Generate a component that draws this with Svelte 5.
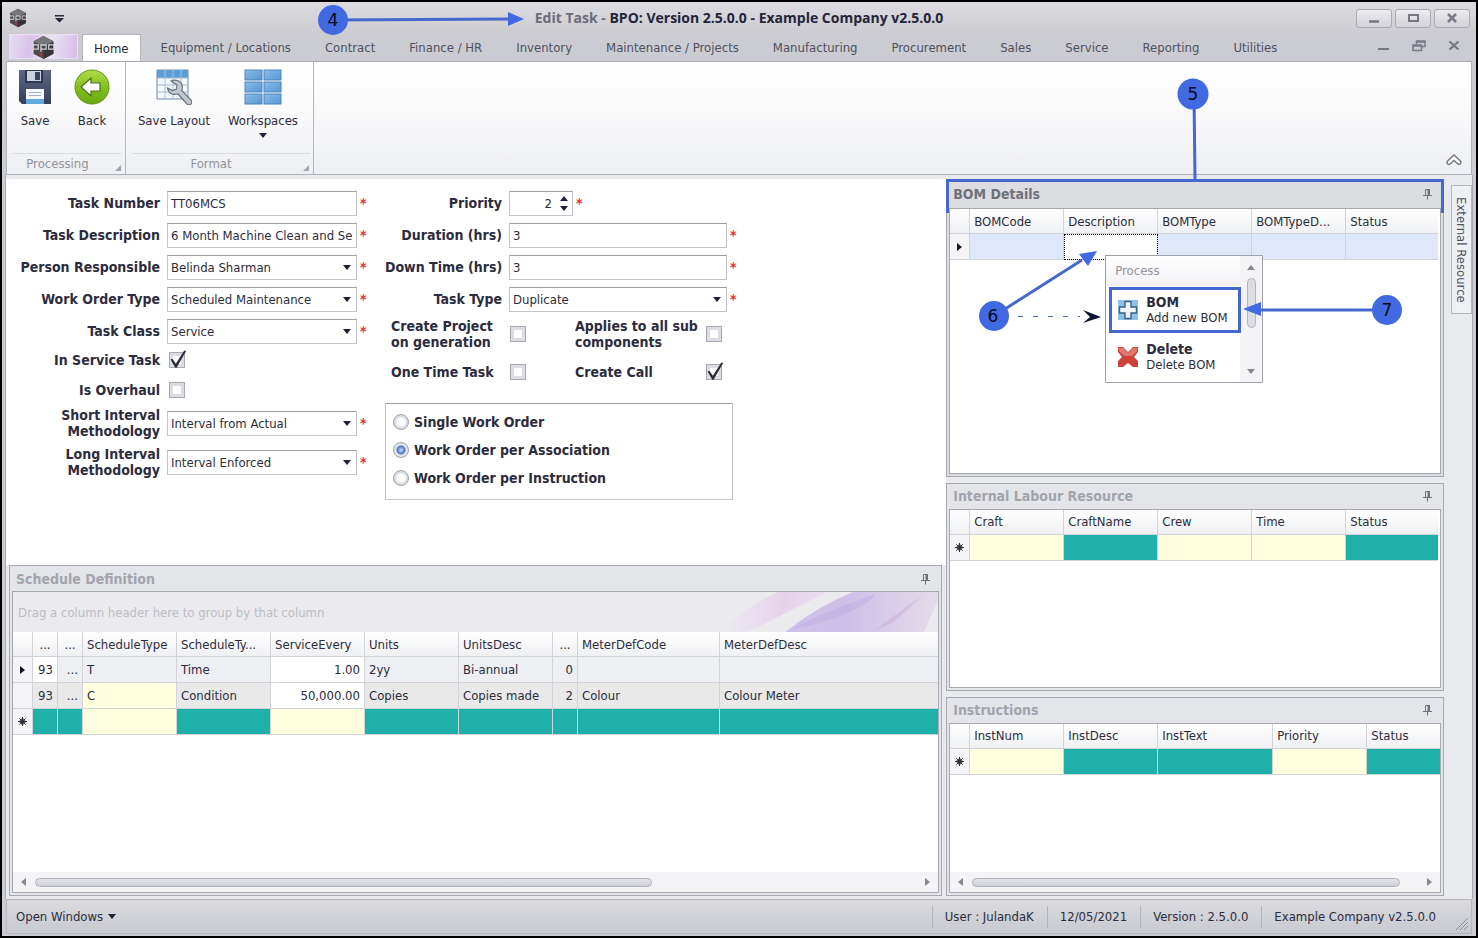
<script lang="ts">
	type Column = { name: string; width?: number };
	type Cell = { text?: string; tone?: string; num?: boolean };

	const tabs = [
		'Home',
		'Equipment / Locations',
		'Contract',
		'Finance / HR',
		'Inventory',
		'Maintenance / Projects',
		'Manufacturing',
		'Procurement',
		'Sales',
		'Service',
		'Reporting',
		'Utilities'
	];
	let activeTab = $state('Home');

	// Form state
	let taskNumber = $state('TT06MCS');
	let taskDescription = $state('6 Month Machine Clean and Service');
	let priority = $state(2);
	let duration = $state('3');
	let downTime = $state('3');
	let inService = $state(true);
	let isOverhaul = $state(false);
	let createProject = $state(false);
	let oneTime = $state(false);
	let allSub = $state(false);
	let createCall = $state(true);
	let grouping = $state('Work Order per Association');

	const groupings = ['Single Work Order', 'Work Order per Association', 'Work Order per Instruction'];

	// Grids
	const scheduleColumns: Column[] = [
		{ name: '...', width: 25 },
		{ name: '...', width: 25 },
		{ name: 'ScheduleType', width: 94 },
		{ name: 'ScheduleTy...', width: 94 },
		{ name: 'ServiceEvery', width: 94 },
		{ name: 'Units', width: 94 },
		{ name: 'UnitsDesc', width: 94 },
		{ name: '...', width: 25 },
		{ name: 'MeterDefCode', width: 142 },
		{ name: 'MeterDefDesc' }
	];

	const scheduleRows: { mark: string; tone: string; cells: Cell[] }[] = [
		{
			mark: 'current',
			tone: 'plain',
			cells: [
				{ text: '93', tone: 'white', num: true },
				{ text: '...', num: true },
				{ text: 'T' },
				{ text: 'Time' },
				{ text: '1.00', tone: 'white', num: true },
				{ text: '2yy' },
				{ text: 'Bi-annual' },
				{ text: '0', num: true },
				{},
				{}
			]
		},
		{
			mark: '',
			tone: 'alt',
			cells: [
				{ text: '93', num: true },
				{ text: '...', num: true },
				{ text: 'C', tone: 'yellow' },
				{ text: 'Condition' },
				{ text: '50,000.00', tone: 'white', num: true },
				{ text: 'Copies' },
				{ text: 'Copies made' },
				{ text: '2', num: true },
				{ text: 'Colour' },
				{ text: 'Colour Meter' }
			]
		},
		{
			mark: 'new',
			tone: 'teal',
			cells: [{}, {}, { tone: 'yellow' }, {}, { tone: 'yellow' }, {}, {}, {}, {}, {}]
		}
	];

	const bomColumns: Column[] = [
		{ name: 'BOMCode', width: 94 },
		{ name: 'Description', width: 94 },
		{ name: 'BOMType', width: 94 },
		{ name: 'BOMTypeD...', width: 94 },
		{ name: 'Status' }
	];
	const bomRows = [
		{ mark: 'current', tone: 'blue', cells: [{}, { tone: 'focused' }, {}, {}, {}] }
	];

	const labourColumns: Column[] = [
		{ name: 'Craft', width: 94 },
		{ name: 'CraftName', width: 94 },
		{ name: 'Crew', width: 94 },
		{ name: 'Time', width: 94 },
		{ name: 'Status' }
	];
	const labourRows = [
		{
			mark: 'new',
			tone: 'teal',
			cells: [{ tone: 'yellow' }, {}, { tone: 'yellow' }, { tone: 'yellow' }, {}]
		}
	];

	const instructionColumns: Column[] = [
		{ name: 'InstNum', width: 94 },
		{ name: 'InstDesc', width: 94 },
		{ name: 'InstText', width: 115 },
		{ name: 'Priority', width: 94 },
		{ name: 'Status' }
	];
	const instructionRows = [
		{
			mark: 'new',
			tone: 'teal',
			cells: [{ tone: 'yellow' }, {}, {}, { tone: 'yellow' }, {}]
		}
	];

	const statusItems = ['User : JulandaK', '12/05/2021', 'Version : 2.5.0.0', 'Example Company v2.5.0.0'];
</script>

{#snippet logo(size: number)}
	<svg width={size} height={size} viewBox="0 0 24 24" aria-hidden="true">
		<path d="M12 1 21.500 6v12L12 23 2.500 18V6z" fill="#4a494c" />
		<path d="M12 1 21.500 6 12 11 2.500 6z" fill="#77777a" />
		<path d="M12 12v11l9.500-5V7z" fill="#353438" />
		<path d="M2 9.500h5v4H2zM9.500 9.500h5v4h-5zM17 9.500h5v4h-5zM2 7v3M9.500 13v3" fill="none" stroke="#d4d4d8" stroke-width="1.200" />
		<path d="M8 17l3 1v3l-3-2z" fill="#a8322c" />
	</svg>
{/snippet}

{#snippet pin()}
	<button class="pin" aria-label="Auto hide">
		<svg width="11" height="12" viewBox="0 0 11 12" aria-hidden="true">
			<path d="M3.500 1.500h4v6h-4z" fill="none" stroke="#6f717b" />
			<path d="M5.500 1h2.500v7H5.500z" fill="#6f717b" />
			<path d="M1 7.500h9M5.500 8v3.500" stroke="#6f717b" />
		</svg>
	</button>
{/snippet}

{#snippet grid(label: string, columns: Column[], rows: { mark: string; tone: string; cells: Cell[] }[])}
	<table aria-label={label}>
		<colgroup>
			<col class="mark-col" />
			{#each columns as column}
				<col style={column.width ? `width: ${column.width}px` : undefined} />
			{/each}
		</colgroup>
		<thead>
			<tr>
				<th></th>
				{#each columns as column}
					<th class:dots={column.name === '...'}>{column.name}</th>
				{/each}
			</tr>
		</thead>
		<tbody>
			{#each rows as row}
				<tr class={row.tone}>
					<td class="mark">
						{#if row.mark === 'current'}
							<svg width="6" height="8" viewBox="0 0 6 8" aria-hidden="true"><path d="M0 0l5 4-5 4z" fill="#15152a" /></svg>
						{:else if row.mark === 'new'}
							<svg width="9" height="9" viewBox="0 0 9 9" aria-hidden="true">
								<path d="M4.500 0v9M0 4.500h9M1.300 1.300l6.400 6.400M7.700 1.300L1.300 7.700" stroke="#30303c" />
								<circle cx="4.500" cy="4.500" r="2.600" fill="none" stroke="#30303c" />
							</svg>
						{/if}
					</td>
					{#each row.cells as cell}
						<td class={cell.tone} class:num={cell.num}>{cell.text ?? ''}</td>
					{/each}
				</tr>
			{/each}
		</tbody>
	</table>
{/snippet}

{#snippet combo(id: string, value: string)}
	<span class="combo">
		<select {id}>
			<option>{value}</option>
		</select>
	</span>
	<span class="star">*</span>
{/snippet}

{#snippet scrollbar(kind: string)}
	<div class="hscroll {kind}">
		<span class="tri prev"></span>
		<span class="track"><span class="thumb"></span></span>
		<span class="tri next"></span>
	</div>
{/snippet}

<div class="window">
	<!-- Title bar -->
	<header class="titlebar">
		<div class="quick">
			{@render logo(20)}
			<button class="quick-menu" aria-label="Customize quick access">
				<svg width="9" height="8" viewBox="0 0 9 8" aria-hidden="true"><path d="M0 0h9v1.500H0zM0 3h9L4.500 7.500z" fill="#26263c" /></svg>
			</button>
		</div>
		<h1><span>Edit Task -</span> BPO: Version 2.5.0.0 - Example Company v2.5.0.0</h1>
		<div class="window-buttons">
			<button aria-label="Minimize"><svg width="14" height="12" viewBox="0 0 14 12"><path d="M2 9.500h10" stroke="#777884" stroke-width="2.500" /></svg></button>
			<button aria-label="Maximize"><svg width="14" height="12" viewBox="0 0 14 12"><path d="M3 3h9v6H3z" fill="none" stroke="#777884" stroke-width="2" /></svg></button>
			<button aria-label="Close"><svg width="14" height="12" viewBox="0 0 14 12"><path d="M3 2l8 8M11 2l-8 8" stroke="#777884" stroke-width="2.500" /></svg></button>
		</div>
	</header>

	<!-- Ribbon tabs -->
	<nav class="tabs">
		<button class="app-button" aria-label="Application menu">{@render logo(25)}</button>
		{#each tabs as tab}
			<button class="tab" class:active={activeTab === tab} onclick={() => (activeTab = tab)}>{tab}</button>
		{/each}
		<div class="child-buttons">
			<button aria-label="Minimize task"><svg width="14" height="14" viewBox="0 0 14 14"><path d="M1 10h11" stroke="#777884" stroke-width="2" /></svg></button>
			<button aria-label="Restore task"><svg width="14" height="14" viewBox="0 0 14 14"><path d="M4.500 5V2h8.500v5.500H9.500M4.500 3h8.500M1 6h8.500v5.500H1zM1 7h8.500" fill="none" stroke="#777884" stroke-width="1.500" /></svg></button>
			<button aria-label="Close task"><svg width="14" height="14" viewBox="0 0 14 14"><path d="M2.500 2.500l9 8M11.500 2.500l-9 8" stroke="#777884" stroke-width="2.200" /></svg></button>
		</div>
	</nav>

	<!-- Ribbon -->
	<section class="ribbon">
		<div class="group">
			<div class="commands processing">
				<button class="command small">
					<svg width="36" height="36" viewBox="0 0 36 36" aria-hidden="true">
						<defs><linearGradient id="disk" x2="0" y2="1"><stop offset="0" stop-color="#5b6785" /><stop offset="1" stop-color="#353f58" /></linearGradient></defs>
						<path d="M2 1h32v34H5l-3-3z" fill="url(#disk)" />
						<path d="M8 1h18v13H8z" fill="#2e374f" />
						<path d="M10 2h14v10H10z" fill="#c9d2e0" />
						<path d="M18 3h5v8h-5z" fill="#39435e" />
						<path d="M9 20h18v15H9z" fill="#f4f7fb" />
						<path d="M9 30h18v5H9z" fill="#63a9de" />
						<path d="M12 23.500h12M12 26.500h12" stroke="#9fb4cc" />
					</svg>
					<span>Save</span>
				</button>
				<button class="command small">
					<svg width="36" height="36" viewBox="0 0 36 36" aria-hidden="true">
						<defs><linearGradient id="back" x2="0" y2="1"><stop offset="0" stop-color="#b2dc4a" /><stop offset=".5" stop-color="#82c01d" /><stop offset="1" stop-color="#6aa812" /></linearGradient></defs>
						<circle cx="18" cy="18" r="17" fill="url(#back)" stroke="#5e9414" />
						<path d="M7 18l10-9v5h9v8h-9v5z" fill="#fff" stroke="#4a6f1c" stroke-width="1.200" />
					</svg>
					<span>Back</span>
				</button>
			</div>
			<div class="caption">Processing</div>
		</div>
		<div class="group">
			<div class="commands format">
				<button class="command wide">
					<svg width="36" height="36" viewBox="0 0 36 36" aria-hidden="true">
						<path d="M1 1h31v29H1z" fill="#f3f7fb" stroke="#7189a5" />
						<path d="M1 1h31v8H1z" fill="#5c9fd8" />
						<path d="M9 1v29M17 1v29M25 1v29M1 9h31M1 16h31M1 23h31" stroke="#a9bdd2" />
						<path d="M15 12c5-2 10 0 11 4 .5 2 .3 4-.5 5.500L35 31c1 1.500 1 3 0 4s-3 1-4 0l-9-10c-5 1.500-10-1-10.500-6l5 2.500 4-1.500.5-4z" fill="#c3c8cf" stroke="#68717d" stroke-width="1.200" />
					</svg>
					<span>Save Layout</span>
				</button>
				<button class="command">
					<svg width="38" height="36" viewBox="0 0 38 36" aria-hidden="true">
						<defs><linearGradient id="tile" x2="1" y2="1"><stop offset="0" stop-color="#8dbde8" /><stop offset="1" stop-color="#5796d2" /></linearGradient></defs>
						{#each [0, 1, 2] as row}
							{#each [0, 1] as column}
								<rect x={1 + column * 19} y={1 + row * 12} width="17" height="10" fill="url(#tile)" stroke="#4a86bd" />
							{/each}
						{/each}
					</svg>
					<span>Workspaces</span>
					<i class="drop"></i>
				</button>
			</div>
			<div class="caption">Format</div>
		</div>
		<button class="collapse" aria-label="Collapse ribbon">
			<svg width="16" height="12" viewBox="0 0 16 12" aria-hidden="true"><path d="M1 7.500L8 1l7 6.500c0 3-2 3.500-3 2.500L8 6.500 4 10c-1 1-3 .5-3-2.500z" fill="#fff" stroke="#71727c" stroke-width="1.400" /></svg>
		</button>
	</section>

	<main>
		<div class="main-column">
			<form class="task-form" onsubmit={(e) => e.preventDefault()}>
				<div class="fields primary">
					<label for="task-number">Task Number</label>
					<input id="task-number" type="text" bind:value={taskNumber} />
					<span class="star">*</span>

					<label for="task-description">Task Description</label>
					<input id="task-description" type="text" bind:value={taskDescription} />
					<span class="star">*</span>

					<label for="person">Person Responsible</label>
					{@render combo('person', 'Belinda Sharman')}

					<label for="order-type">Work Order Type</label>
					{@render combo('order-type', 'Scheduled Maintenance')}

					<label for="task-class">Task Class</label>
					{@render combo('task-class', 'Service')}

					<label for="in-service">In Service Task</label>
					<input id="in-service" type="checkbox" bind:checked={inService} />
					<span></span>

					<label for="overhaul">Is Overhaul</label>
					<input id="overhaul" type="checkbox" bind:checked={isOverhaul} />
					<span></span>

					<label for="short-interval">Short Interval<br />Methodology</label>
					{@render combo('short-interval', 'Interval from Actual')}

					<label for="long-interval">Long Interval<br />Methodology</label>
					{@render combo('long-interval', 'Interval Enforced')}
				</div>

				<div class="secondary">
					<div class="fields">
						<label for="priority">Priority</label>
						<span class="spin-row">
							<span class="spinner">
								<input id="priority" type="number" bind:value={priority} />
								<span class="arrows">
									<button type="button" class="up" aria-label="Increase" onclick={() => priority++}></button>
									<button type="button" class="down" aria-label="Decrease" onclick={() => priority--}></button>
								</span>
							</span>
							<span class="star">*</span>
						</span>
						<span></span>

						<label for="duration">Duration (hrs)</label>
						<input id="duration" type="text" bind:value={duration} />
						<span class="star">*</span>

						<label for="down-time">Down Time (hrs)</label>
						<input id="down-time" type="text" bind:value={downTime} />
						<span class="star">*</span>

						<label for="task-type">Task Type</label>
						{@render combo('task-type', 'Duplicate')}
					</div>

					<div class="checks">
						<label for="create-project">Create Project<br />on generation</label>
						<input id="create-project" type="checkbox" bind:checked={createProject} />
						<label for="all-sub">Applies to all sub<br />components</label>
						<input id="all-sub" type="checkbox" bind:checked={allSub} />
						<label for="one-time">One Time Task</label>
						<input id="one-time" type="checkbox" bind:checked={oneTime} />
						<label for="create-call">Create Call</label>
						<input id="create-call" type="checkbox" bind:checked={createCall} />
					</div>

					<div class="radios" role="radiogroup" aria-label="Work order grouping">
						{#each groupings as option}
							<label><input type="radio" name="grouping" value={option} bind:group={grouping} />{option}</label>
						{/each}
					</div>
				</div>
			</form>

			<section class="panel schedule">
				<div class="panel-title"><h2>Schedule Definition</h2>{@render pin()}</div>
				<div class="panel-body">
					<div class="group-by">
						<span>Drag a column header here to group by that column</span>
						<svg width="240" height="40" viewBox="0 0 240 40" aria-hidden="true">
							<defs>
								<linearGradient id="pink"><stop offset="0" stop-color="#e9d9ee" stop-opacity="0" /><stop offset=".6" stop-color="#e6d2ec" /><stop offset="1" stop-color="#eadff0" /></linearGradient>
								<linearGradient id="violet"><stop offset="0" stop-color="#cfc3ea" /><stop offset=".4" stop-color="#cdbfe8" /><stop offset="1" stop-color="#e4dcea" /></linearGradient>
							</defs>
							<path d="M20 40Q60 8 80 0H129L62 34 48 40z" fill="url(#pink)" />
							<path d="M87 40Q120 14 155 0H240V8L226 40z" fill="url(#violet)" />
							<path d="M92 38Q125 20 178 2 160 24 92 38z" fill="#bdabe4" opacity=".5" />
							<path d="M174 40L226 2 196 30z" fill="#cdb2da" opacity=".6" />
						</svg>
					</div>
					{@render grid('Schedule Definition', scheduleColumns, scheduleRows)}
					{@render scrollbar('long')}
				</div>
			</section>
		</div>

		<div class="dock-column">
			<section class="panel bom">
				<div class="panel-title"><h2>BOM Details</h2>{@render pin()}</div>
				<div class="panel-body inset">{@render grid('BOM Details', bomColumns, bomRows)}</div>

				<div class="menu" role="menu">
					<div class="menu-items">
						<div class="menu-head">Process</div>
						<button class="menu-item" role="menuitem">
							<svg width="20" height="20" viewBox="0 0 20 20" aria-hidden="true">
								<path d="M0 0h20v20H0z" fill="#8cc0e4" />
								<path d="M7 1.500h6V7h5.500v6H13v5.500H7V13H1.500V7H7z" fill="#eef5fb" stroke="#3a6386" stroke-width="1.400" />
							</svg>
							<span><b>BOM</b>Add new BOM</span>
						</button>
						<button class="menu-item" role="menuitem">
							<svg width="20" height="20" viewBox="0 0 20 20" aria-hidden="true">
								<path d="M0 0h5l5 5 5-5h5v5l-4 5 4 4v6h-5l-5-4-5 4H0v-6l4-4-4-5z" fill="#cd4238" />
								<path d="M1 1h4l5 5 5-5h4v3l-5 5H6L1 4z" fill="#e4776d" />
							</svg>
							<span><b>Delete</b>Delete BOM</span>
						</button>
					</div>
					<div class="vscroll">
						<span class="tri top"></span>
						<span class="vthumb"></span>
						<span class="tri bottom"></span>
					</div>
				</div>
			</section>

			<section class="panel labour">
				<div class="panel-title"><h2>Internal Labour Resource</h2>{@render pin()}</div>
				<div class="panel-body inset">{@render grid('Internal Labour Resource', labourColumns, labourRows)}</div>
			</section>

			<section class="panel instructions">
				<div class="panel-title"><h2>Instructions</h2>{@render pin()}</div>
				<div class="panel-body">
					{@render grid('Instructions', instructionColumns, instructionRows)}
					{@render scrollbar('short')}
				</div>
			</section>
		</div>

		<aside><button class="side-tab">External Resource</button></aside>
	</main>

	<footer>
		<button class="open-windows">Open Windows <i class="drop"></i></button>
		<div class="status">
			{#each statusItems as item}
				<span>{item}</span>
			{/each}
		</div>
		<svg class="grip" width="14" height="14" viewBox="0 0 14 14" aria-hidden="true"><path d="M1 13L13 1M5 13l8-8M9 13l4-4" stroke="#8e8f98" /></svg>
	</footer>

	<!-- Numbered callouts drawn over the window -->
	<svg class="callouts" width="1478" height="938" viewBox="0 0 1478 938">
		<g stroke="#4468cf" stroke-width="3" fill="none">
			<path d="M333 20L510 19M1194 94l1 86M994 316l88-56M1387 310H1258" />
			<path d="M947.500 213V180.500H1442.500V213" />
			<path d="M1110.500 288.500H1239.500V331.500H1110.500z" />
		</g>
		<path d="M524 19l-16-7v14zM1097 251l-18 3 9 12zM1243 309l18-7v14z" fill="#4169e1" />
		<path d="M1018 316.500h62" stroke="#4468cf" stroke-dasharray="5 10" />
		<path d="M1101 317l-18-7 7 7-7 6z" fill="#0b1238" />
		<g fill="#4169e1">
			<circle cx="333" cy="20" r="15" />
			<circle cx="1193" cy="94" r="15.500" />
			<circle cx="994" cy="316" r="15" />
			<circle cx="1387" cy="310" r="15" />
		</g>
		<g class="numbers">
			<text x="333" y="26">4</text>
			<text x="1193" y="100">5</text>
			<text x="993" y="322">6</text>
			<text x="1387" y="316">7</text>
		</g>
	</svg>
</div>

<style>
	:global(body) {
		background: #000;
	}

	.window,
	.window :is(button, input, select) {
		font-family: 'DejaVu Sans Condensed', 'DejaVu Sans', 'Noto Sans', sans-serif;
		font-stretch: condensed;
		font-size: 13px;
		color: #2c2c3e;
	}

	.window {
		position: relative;
		box-sizing: border-box;
		min-height: 100vh;
		display: flex;
		flex-direction: column;
		padding: 0 4px 2px;
		border: 2px solid #000;
		background: #cbccd2;
		overflow: hidden;
	}

	button {
		padding: 0;
		border: 0;
		background: none;
		cursor: pointer;
	}

	h1,
	h2 {
		margin: 0;
	}

	/* Title bar */
	.titlebar {
		display: grid;
		grid-template-columns: 1fr auto 1fr;
		align-items: center;
		height: 32px;
		margin: 0 -4px;
		padding: 0 6px;
		background: linear-gradient(#dcdce0, #cbcbd1);
	}

	.titlebar h1 {
		font-family: 'Open Sans', 'Noto Sans', sans-serif;
		font-stretch: normal;
		font-size: 14px;
		line-height: 16px;
		font-weight: 700;
		color: #24243a;
	}

	.titlebar h1 span {
		color: #6c6c78;
	}

	.quick {
		display: flex;
		align-items: center;
		gap: 27px;
	}

	.window-buttons {
		display: flex;
		justify-content: flex-end;
		gap: 3px;
	}

	.window-buttons button {
		display: grid;
		place-items: center;
		width: 36px;
		height: 19px;
		border: 1px solid #a9a9b2;
		border-radius: 3px;
		background: linear-gradient(#ececef, #d2d2d8);
	}

	/* Tabs */
	.tabs {
		display: flex;
		gap: 6px;
		height: 27px;
		padding-left: 3px;
	}

	.app-button {
		display: grid;
		place-items: center;
		width: 69px;
		height: 25px;
		margin-right: -2px;
		border: 1px solid #e9e0f0;
		background: linear-gradient(100deg, #e6dcf2, #d9c3ea 30%, #e9e4f4 60%, #d6bce8);
	}

	.window .tab {
		padding: 0 14px;
		color: #50505e;
	}

	.window .tab.active {
		padding: 0 11px;
		border: 1px solid #b4b5bd;
		border-bottom: 0;
		background: #fff;
		color: #26263a;
	}

	.child-buttons {
		display: flex;
		gap: 21px;
		margin-left: auto;
		padding-right: 11px;
	}

	/* Ribbon */
	.ribbon {
		display: flex;
		height: 112px;
		border: 1px solid #b0b1ba;
		border-top-color: #a8a9b2;
		background: linear-gradient(#fff, #fafafb 40%, #eeeff2);
	}

	.group {
		display: flex;
		flex-direction: column;
		justify-content: space-between;
		border-right: 1px solid #b5b6be;
	}

	.commands {
		display: flex;
		padding-top: 7px;
	}

	.processing {
		gap: 9px;
		padding-left: 4px;
		padding-right: 9px;
	}

	.format {
		gap: 16px;
		padding-left: 10px;
		padding-right: 15px;
	}

	.command {
		display: flex;
		flex-direction: column;
		align-items: center;
		gap: 8px;
	}

	.command.small {
		width: 48px;
	}

	.command.wide {
		width: 76px;
	}

	.drop {
		width: 0;
		border: 4px solid transparent;
		border-top: 5px solid #20203a;
		border-bottom: 0;
	}

	.command .drop {
		margin-top: -3px;
	}

	.caption {
		position: relative;
		height: 20px;
		border-top: 1px solid #dcdde2;
		margin: 0 3px 0 6px;
		padding-right: 20px;
		line-height: 20px;
		text-align: center;
		color: #92939d;
	}

	.caption::after {
		content: '';
		position: absolute;
		right: 1px;
		bottom: 3px;
		border: 3px solid transparent;
		border-right-color: #a4a5ae;
		border-bottom-color: #a4a5ae;
	}

	.collapse {
		margin: auto 9px 5px auto;
	}

	/* Work area */
	main {
		flex: 1;
		display: grid;
		grid-template-columns: minmax(0, 17fr) minmax(0, 9fr) 28px;
		padding-top: 4px;
		background: #e9eaee;
		border: solid #a9aab3;
		border-width: 0 1px;
		margin: 0 -1px;
	}

	.main-column,
	.dock-column {
		display: flex;
		flex-direction: column;
	}

	.dock-column {
		gap: 6px;
		padding-bottom: 3px;
	}

	.task-form {
		flex: 384 0 0;
		display: flex;
		align-items: flex-start;
		gap: 13px;
		padding-top: 8px;
		background: #fff;
	}

	.fields {
		display: grid;
		grid-template-columns: 117px 218px 8px;
		grid-auto-rows: 32px;
		column-gap: 7px;
		align-items: center;
	}

	.fields.primary {
		grid-template-columns: 154px 190px 8px;
		grid-template-rows: repeat(5, 32px) 26px 34px 32px 46px;
	}

	label {
		font-size: 14px;
		font-weight: 700;
		line-height: 16px;
	}

	.fields label {
		text-align: right;
		white-space: nowrap;
	}

	.star {
		margin-left: -4px;
		line-height: 16px;
		font-size: 14px;
		font-weight: 700;
		color: #e2303a;
	}

	.window :is(input[type='text'], select),
	.spinner {
		box-sizing: border-box;
		width: 100%;
		height: 25px;
		padding: 0 4px 0 3px;
		border: 1px solid #c4c5cc;
		border-top-color: #9c9da6;
		border-radius: 0;
		background: #fff;
		appearance: none;
		outline: 0;
	}

	.combo {
		position: relative;
	}

	.combo::after {
		content: '';
		position: absolute;
		right: 6px;
		top: 10px;
		border: 4px solid transparent;
		border-top: 5px solid #20203a;
		border-bottom: 0;
		pointer-events: none;
	}

	.spin-row {
		display: flex;
		align-items: center;
		gap: 7px;
	}

	.window .spinner {
		display: flex;
		width: 64px;
	}

	.spinner input {
		flex: 1;
		min-width: 0;
		padding: 0;
		border: 0;
		outline: 0;
		text-align: right;
		appearance: textfield;
	}

	.spinner input::-webkit-inner-spin-button {
		appearance: none;
		margin: 0;
	}

	.arrows {
		display: flex;
		flex-direction: column;
		justify-content: center;
		gap: 5px;
		padding-left: 8px;
	}

	.arrows button {
		border: 4px solid transparent;
	}

	.arrows .up {
		border-top: 0;
		border-bottom: 5px solid #20203a;
	}

	.arrows .down {
		border-bottom: 0;
		border-top: 5px solid #20203a;
	}

	input[type='checkbox'] {
		appearance: none;
		position: relative;
		width: 16px;
		height: 16px;
		margin: 0 0 0 2px;
		border: 1px solid #a7a8b1;
		background: #fff;
		box-shadow: inset 0 0 0 3px #dcdde2;
	}

	input[type='checkbox']:checked::after {
		content: '';
		position: absolute;
		left: -1px;
		top: -3px;
		width: 18px;
		height: 18px;
		background: #2b2b3c;
		clip-path: polygon(8% 52%, 20% 50%, 38% 76%, 84% 4%, 96% 4%, 42% 98%, 35% 98%);
	}

	.checks {
		display: grid;
		grid-template-columns: 117px 67px 129px 18px;
		grid-template-rows: 38px 38px;
		align-items: center;
		padding-left: 6px;
		white-space: nowrap;
	}

	.radios {
		display: flex;
		flex-direction: column;
		justify-content: center;
		gap: 12px;
		box-sizing: border-box;
		width: 348px;
		height: 97px;
		margin-top: 12px;
		padding: 0 7px 3px;
		border: 1px solid #c4c5cc;
		border-top-color: #9c9da6;
	}

	.radios label {
		display: flex;
		align-items: center;
		gap: 5px;
	}

	input[type='radio'] {
		appearance: none;
		box-sizing: border-box;
		width: 16px;
		height: 16px;
		margin: 0;
		border: 1px solid #9fa0aa;
		border-radius: 50%;
		background: radial-gradient(#fff 35%, #dcdde2 60%);
	}

	input[type='radio']:checked {
		background: radial-gradient(circle at 50% 50%, #b4cbf6 8%, #4a6fc4 40%, #e2e3e9 50%);
	}

	/* Docked panels */
	.panel {
		position: relative;
		display: flex;
		flex-direction: column;
		box-sizing: border-box;
		min-height: 0;
		padding: 0 2px 2px;
		border: 1px solid #a6a7b0;
		background: #e4e5e9;
	}

	.schedule {
		flex: 332 0 0;
		margin: 0 4px 3px 3px;
	}

	.bom {
		flex: 299 0 0;
		background: #dcdde1;
	}

	.labour {
		flex: 208 0 0;
	}

	.instructions {
		flex: 199 0 0;
	}

	.panel-title {
		display: flex;
		align-items: center;
		justify-content: space-between;
		height: 25px;
		padding: 0 8px 0 4px;
	}

	.bom .panel-title {
		height: 28px;
	}

	.panel-title h2 {
		font-size: 14px;
		line-height: 16px;
		color: #a2a4ac;
	}

	.panel.bom h2 {
		color: #6f717b;
	}

	.pin {
		display: flex;
	}

	.panel-body {
		flex: 1;
		display: flex;
		flex-direction: column;
		min-height: 0;
		border: 1px solid #a6a7b0;
		background: #fff;
		overflow: hidden;
	}

	.inset {
		padding-right: 2px;
	}

	.group-by {
		display: flex;
		align-items: center;
		justify-content: space-between;
		height: 40px;
		padding-left: 5px;
		background: #ebebee;
		color: #bcbdc6;
	}

	table {
		width: 100%;
		border-collapse: separate;
		border-spacing: 0;
		table-layout: fixed;
	}

	.mark-col {
		width: 20px;
	}

	th,
	td {
		box-sizing: border-box;
		height: 26px;
		padding: 0 4px;
		border-right: 1px solid #d2d3d9;
		border-bottom: 1px solid #d2d3d9;
		overflow: hidden;
		white-space: nowrap;
		text-align: left;
		font-weight: 400;
	}

	th {
		height: 25px;
		background: linear-gradient(#fff, #eff0f3);
	}

	th.dots {
		padding: 0;
		text-align: center;
	}

	.panel tr > :last-child {
		border-right: 0;
	}

	td.mark {
		padding: 0;
		text-align: center;
		background: #f5f5f8;
	}

	td.num {
		text-align: right;
	}

	.plain td:not(.mark) {
		background: #eeeff2;
	}

	.alt td:not(.mark) {
		background: #e9e9ea;
	}

	.teal td:not(.mark) {
		background: #20b0aa;
	}

	.blue td:not(.mark) {
		background: #dfe8fb;
	}

	tr td.white:not(.mark),
	tr td.focused:not(.mark) {
		background: #fff;
	}

	tr td.yellow:not(.mark) {
		background: #ffffe0;
	}

	td.focused {
		outline: 1px dotted #000;
		outline-offset: -1px;
	}

	/* Scroll bars */
	.hscroll {
		display: flex;
		align-items: center;
		gap: 9px;
		height: 20px;
		margin-top: auto;
		padding: 0 8px;
		background: #f4f4f7;
	}

	.track {
		flex: 1;
		display: flex;
	}

	.thumb {
		box-sizing: border-box;
		height: 9px;
		width: 70%;
		border: 1px solid #b2b3bc;
		border-radius: 5px;
		background: linear-gradient(#e2e3e8, #d0d1d8);
	}

	.short .thumb {
		width: 96%;
	}

	.tri {
		border: 4px solid transparent;
	}

	.tri.prev {
		border-left: 0;
		border-right: 5px solid #85868f;
	}

	.tri.next {
		border-right: 0;
		border-left: 5px solid #85868f;
	}

	.tri.top {
		border-top: 0;
		border-bottom: 5px solid #85868f;
	}

	.tri.bottom {
		border-bottom: 0;
		border-top: 5px solid #85868f;
	}

	/* Context menu */
	.menu {
		position: absolute;
		left: 158px;
		top: 75px;
		display: flex;
		box-sizing: border-box;
		width: 158px;
		height: 128px;
		border: 1px solid #9fa0a9;
		background: #fff;
	}

	.menu-items {
		flex: 1;
		display: flex;
		flex-direction: column;
	}

	.menu-head {
		height: 30px;
		padding-left: 9px;
		background: linear-gradient(#fff, #f2f2f5);
		line-height: 30px;
		color: #92939d;
	}

	.menu-item {
		display: flex;
		align-items: center;
		gap: 8px;
		height: 47px;
		padding-left: 12px;
		text-align: left;
		line-height: 16px;
		white-space: nowrap;
	}

	.menu-item b {
		display: block;
		font-size: 14px;
	}

	.vscroll {
		display: flex;
		flex-direction: column;
		align-items: center;
		width: 22px;
		padding: 9px 0 8px;
		box-sizing: border-box;
		background: #f4f4f7;
	}

	.vthumb {
		box-sizing: border-box;
		width: 9px;
		height: 50px;
		margin: 8px 0 auto;
		border: 1px solid #b2b3bc;
		border-radius: 5px;
		background: #dcdde3;
	}

	/* Auto-hide side tab */
	aside {
		display: flex;
		justify-content: flex-end;
		align-items: flex-start;
		padding-top: 6px;
	}

	.window .side-tab {
		box-sizing: border-box;
		width: 21px;
		height: 129px;
		border: 1px solid #b5b6be;
		background: #eff0f3;
		writing-mode: vertical-rl;
		white-space: nowrap;
		color: #50505e;
	}

	/* Status bar */
	footer {
		display: flex;
		align-items: center;
		height: 33px;
		padding-left: 9px;
		border: 1px solid #b5b6be;
		background: linear-gradient(#dadade, #c9cad0);
	}

	.open-windows {
		display: flex;
		align-items: center;
		gap: 5px;
	}

	.status {
		display: flex;
		margin-left: auto;
	}

	.status span {
		padding: 0 13px 0 12px;
		border-left: 1px solid #b2b3bb;
		line-height: 22px;
	}

	.grip {
		align-self: flex-end;
		margin: 0 2px 2px 6px;
	}

	/* Callouts */
	.callouts {
		position: absolute;
		left: -2px;
		top: -2px;
		pointer-events: none;
	}

	.numbers {
		font-family: 'DejaVu Sans', sans-serif;
		font-stretch: normal;
		font-size: 17px;
		text-anchor: middle;
		fill: #0a0a14;
	}
</style>
